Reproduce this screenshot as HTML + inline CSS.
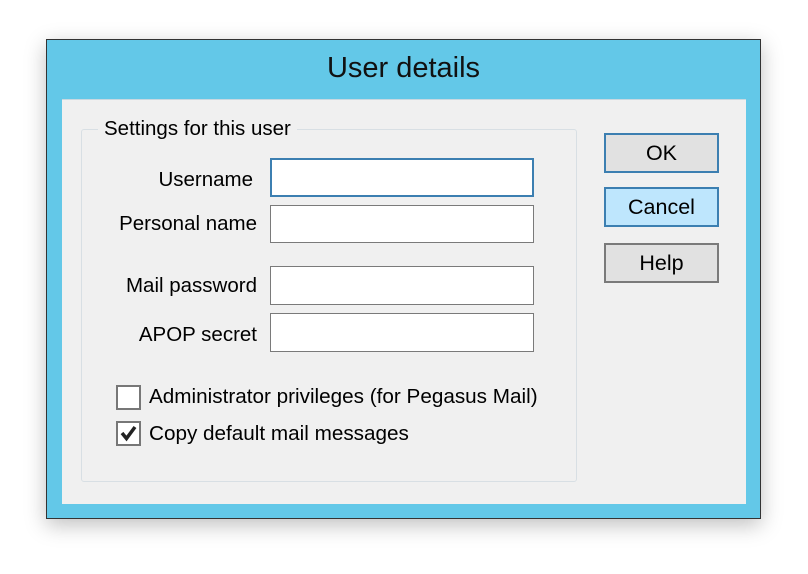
<!DOCTYPE html>
<html><head><style>
body{margin:0;width:808px;height:574px;background:#fff;position:relative;font-family:"Liberation Sans",sans-serif;color:#000;overflow:hidden}
.win{position:absolute;left:46px;top:39px;width:713px;height:478px;background:#63c8e8;border:1px solid #333;box-shadow:0 6px 20px rgba(0,0,0,.25)}
.title{position:absolute;left:0;right:0;top:12px;text-align:center;font-size:29px;color:#111}
.client{position:absolute;left:62px;top:99px;width:684px;height:404px;background:#f0f0f0;border-top:1px solid #c8d8e0}
.a{position:absolute}
.gb{left:81px;top:129px;width:494px;height:351px;border:1px solid #d8dfe4;border-radius:3px}
.gl{left:98px;top:117px;background:#f0f0f0;padding:0 6px;font-size:20.5px}
.lbl{font-size:20.5px;text-align:right;width:200px}
.tb{left:270px;width:262px;height:37px;background:#fff;border:1px solid #7a7a7a;box-sizing:border-box}
.btn{left:604px;width:115px;height:40px;box-sizing:border-box;border:2px solid #adadad;background:#e1e1e1;font-size:21.5px;text-align:center;line-height:36px}
.cb{left:116px;width:25px;height:25px;box-sizing:border-box;border:2px solid #777;background:#fff}
.ct{left:149px;font-size:20.7px}
</style></head><body>
<div class="win"><div class="title">User details</div></div>
<div class="a client"></div>
<div class="a gb"></div>
<div class="a gl">Settings for this user</div>
<div class="a lbl" style="left:53px;top:168px">Username</div>
<div class="a lbl" style="left:57px;top:212px">Personal name</div>
<div class="a lbl" style="left:57px;top:274px">Mail password</div>
<div class="a lbl" style="left:57px;top:323px">APOP secret</div>
<div class="a tb" style="top:158px;height:39px;border:2px solid #3c7fb1;width:264px"></div>
<div class="a tb" style="top:205px;height:38px;width:264px"></div>
<div class="a tb" style="top:266px;height:39px;width:264px"></div>
<div class="a tb" style="top:313px;height:39px;width:264px"></div>
<div class="a btn" style="top:133px;border-color:#3c7fb1">OK</div>
<div class="a btn" style="top:187px;border-color:#3c7fb1;background:#bee6fd">Cancel</div>
<div class="a btn" style="top:243px;border-color:#7a7a7a">Help</div>
<div class="a cb" style="top:385px"></div>
<div class="a ct" style="top:385px">Administrator privileges (for Pegasus Mail)</div>
<div class="a cb" style="top:421px"><svg width="21" height="21" viewBox="0 0 21 21"><path d="M4 10 L8.5 15.5 L17 4" fill="none" stroke="#222" stroke-width="3.5"/></svg></div>
<div class="a ct" style="top:422px">Copy default mail messages</div>
</body></html>
